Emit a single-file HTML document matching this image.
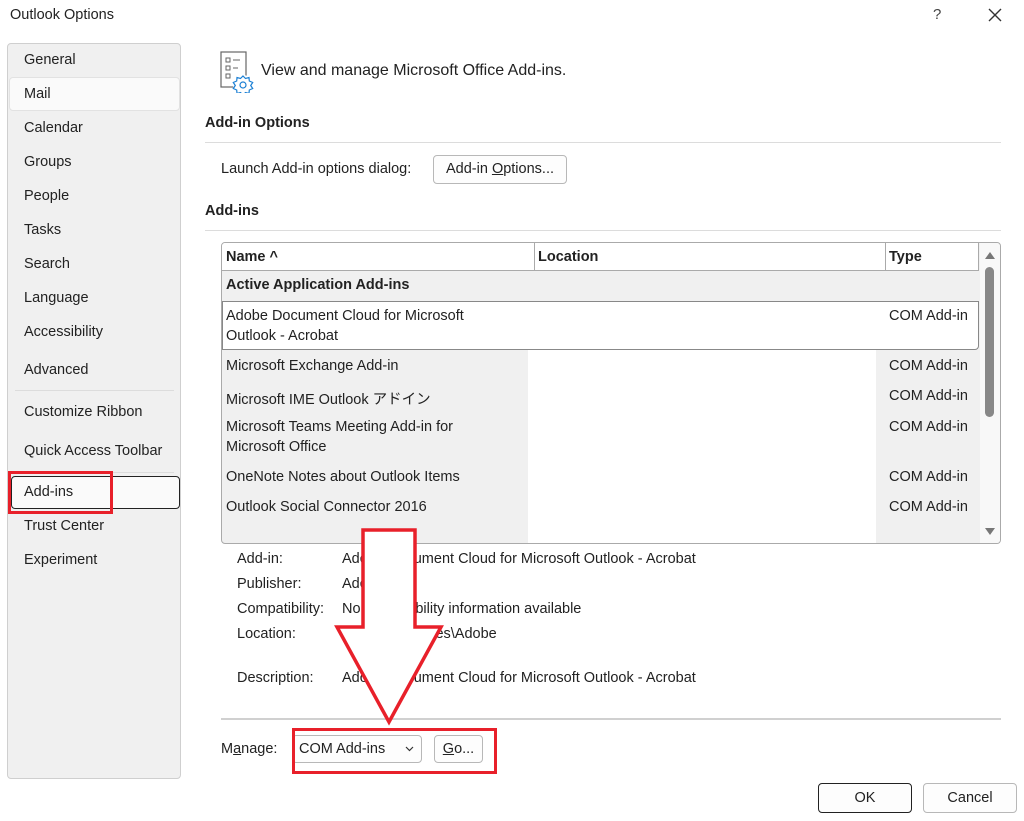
<!DOCTYPE html>
<html><head><meta charset="utf-8"><style>
*{margin:0;padding:0;box-sizing:border-box}
body{width:1024px;height:821px;background:#fff;font-family:"Liberation Sans","Noto Sans CJK JP",sans-serif;font-size:14.5px;color:#222;position:relative;overflow:hidden}
.a{position:absolute;white-space:nowrap}
.nav{position:absolute;left:24px}
.b{font-weight:bold}
.btn{position:absolute;border:1px solid #b8b8b8;border-radius:4px;background:#fdfdfd;text-align:center}
.hl{position:absolute;height:1px;background:#dcdcdc}
</style></head><body>
<div class="a" style="left:10px;top:7px;font-size:14.5px">Outlook Options</div>
<div class="a" style="left:933px;top:6px;font-size:15px;color:#444">?</div>
<svg class="a" style="left:988px;top:8px" width="14" height="14"><path d="M1 1L13 13M13 1L1 13" stroke="#333" stroke-width="1.4"/></svg>

<div class="a" style="left:7px;top:43px;width:174px;height:736px;background:#f0f0f0;border:1px solid #cfcfcf;border-radius:4px"></div>
<div class="a" style="left:9px;top:77px;width:171px;height:34px;background:#fafafa;border:1px solid #e2e2e2;border-radius:4px"></div>
<div class="a" style="left:11px;top:476px;width:169px;height:33px;background:#fafafa;border:1.5px solid #222;border-radius:4px"></div>
<div class="hl" style="left:15px;top:390px;width:159px"></div>
<div class="hl" style="left:15px;top:472px;width:159px"></div>
<div class="nav a" style="top:52px">General</div>
<div class="nav a" style="top:86px">Mail</div>
<div class="nav a" style="top:120px">Calendar</div>
<div class="nav a" style="top:154px">Groups</div>
<div class="nav a" style="top:188px">People</div>
<div class="nav a" style="top:222px">Tasks</div>
<div class="nav a" style="top:256px">Search</div>
<div class="nav a" style="top:290px">Language</div>
<div class="nav a" style="top:324px">Accessibility</div>
<div class="nav a" style="top:362px">Advanced</div>
<div class="nav a" style="top:404px">Customize Ribbon</div>
<div class="nav a" style="top:443px">Quick Access Toolbar</div>
<div class="nav a" style="top:484px">Add-ins</div>
<div class="nav a" style="top:518px">Trust Center</div>
<div class="nav a" style="top:552px">Experiment</div>
<div class="a" style="left:8px;top:471px;width:105px;height:43px;border:3px solid #e8202a"></div>

<svg class="a" style="left:220px;top:51px" width="36" height="42">
<rect x="1" y="1" width="25" height="35" fill="none" stroke="#666" stroke-width="1.2"/>
<rect x="6" y="7" width="4" height="4" fill="none" stroke="#666"/><line x1="13" y1="9" x2="20" y2="9" stroke="#666"/>
<rect x="6" y="15" width="4" height="4" fill="none" stroke="#666"/><line x1="13" y1="17" x2="18" y2="17" stroke="#666"/>
<rect x="6" y="23" width="4" height="4" fill="none" stroke="#666"/>
<circle cx="23" cy="34" r="10" fill="#fff"/>
<path d="M23 25l2.5 2.5 3.5-1 0.3 3.5 3.4 1.5-2 3 2 3-3.4 1.5-0.3 3.5-3.5-1-2.5 2.5-2.5-2.5-3.5 1-0.3-3.5-3.4-1.5 2-3-2-3 3.4-1.5 0.3-3.5 3.5 1z" fill="#fff" stroke="#1a7fd4" stroke-width="1.2"/>
<circle cx="23" cy="34" r="3" fill="none" stroke="#1a7fd4" stroke-width="1.2"/>
</svg>
<div class="a" style="left:261px;top:62px;font-size:16px">View and manage Microsoft Office Add-ins.</div>

<div class="a b" style="left:205px;top:115px">Add-in Options</div>
<div class="hl" style="left:205px;top:142px;width:796px"></div>
<div class="a" style="left:221px;top:161px">Launch Add-in options dialog:</div>
<div class="btn" style="left:433px;top:155px;width:134px;height:29px;line-height:27px">Add-in <u>O</u>ptions...</div>
<div class="a b" style="left:205px;top:203px">Add-ins</div>
<div class="hl" style="left:205px;top:230px;width:796px"></div>

<div class="a" style="left:221px;top:242px;width:780px;height:302px;border:1px solid #aaa;border-radius:4px;background:#f0f0f0;overflow:hidden">
 <div class="a" style="left:0;top:0;width:757px;height:28px;background:#fff;border-bottom:1px solid #aaa"></div>
 <div class="a" style="left:312px;top:0;width:1px;height:28px;background:#aaa"></div>
 <div class="a" style="left:663px;top:0;width:1px;height:28px;background:#aaa"></div>
 <div class="a" style="left:756px;top:0;width:1px;height:28px;background:#aaa"></div>
 <div class="a b" style="left:4px;top:6px">Name ^</div>
 <div class="a b" style="left:316px;top:6px">Location</div>
 <div class="a b" style="left:667px;top:6px">Type</div>
 <div class="a b" style="left:4px;top:34px">Active Application Add-ins</div>
 <div class="a" style="left:306px;top:107px;width:348px;height:200px;background:#fff"></div>
 <div class="a" style="left:0;top:58px;width:757px;height:49px;background:#fff;border:1px solid #888;border-radius:0 0 4px 0"></div>
 <div class="a" style="left:4px;top:65px">Adobe Document Cloud for Microsoft</div>
 <div class="a" style="left:4px;top:85px">Outlook - Acrobat</div>
 <div class="a" style="left:667px;top:65px">COM Add-in</div>
 <div class="a" style="left:4px;top:115px">Microsoft Exchange Add-in</div><div class="a" style="left:667px;top:115px">COM Add-in</div>
 <div class="a" style="left:4px;top:145px">Microsoft IME Outlook アドイン</div><div class="a" style="left:667px;top:145px">COM Add-in</div>
 <div class="a" style="left:4px;top:176px">Microsoft Teams Meeting Add-in for</div><div class="a" style="left:667px;top:176px">COM Add-in</div>
 <div class="a" style="left:4px;top:196px">Microsoft Office</div>
 <div class="a" style="left:4px;top:226px">OneNote Notes about Outlook Items</div><div class="a" style="left:667px;top:226px">COM Add-in</div>
 <div class="a" style="left:4px;top:256px">Outlook Social Connector 2016</div><div class="a" style="left:667px;top:256px">COM Add-in</div>
 <div class="a" style="left:758px;top:0;width:22px;height:302px;background:#f8f8f8"></div>
 <svg class="a" style="left:762px;top:7px" width="12" height="10"><path d="M1 9L6 2L11 9z" fill="#777"/></svg>
 <div class="a" style="left:763px;top:24px;width:9px;height:150px;background:#888;border-radius:5px"></div>
 <svg class="a" style="left:762px;top:284px" width="12" height="10"><path d="M1 1L6 8L11 1z" fill="#777"/></svg>
</div>

<div class="a" style="left:237px;top:551px">Add-in:</div><div class="a" style="left:342px;top:551px">Adobe Document Cloud for Microsoft Outlook - Acrobat</div>
<div class="a" style="left:237px;top:576px">Publisher:</div><div class="a" style="left:342px;top:576px">Adobe</div>
<div class="a" style="left:237px;top:601px">Compatibility:</div><div class="a" style="left:342px;top:601px">No compatibility information available</div>
<div class="a" style="left:237px;top:626px">Location:</div><div class="a" style="left:342px;top:626px">C:\Program Files\Adobe</div>
<div class="a" style="left:237px;top:670px">Description:</div><div class="a" style="left:342px;top:670px">Adobe Document Cloud for Microsoft Outlook - Acrobat</div>

<div class="a" style="left:221px;top:718px;width:780px;height:2px;background:#d0d0d0"></div>
<div class="a" style="left:221px;top:741px"><span>M<u>a</u>nage:</span></div>
<div class="btn" style="left:292px;top:735px;width:130px;height:28px;text-align:left;padding-left:6px;line-height:26px">COM Add-ins
<svg style="position:absolute;right:7px;top:10px" width="9" height="6"><path d="M1 1L4.5 4.5L8 1" fill="none" stroke="#333" stroke-width="1.2"/></svg></div>
<div class="btn" style="left:434px;top:735px;width:49px;height:28px;line-height:26px"><u>G</u>o...</div>
<div class="a" style="left:292px;top:728px;width:205px;height:46px;border:3px solid #e8202a"></div>

<svg class="a" style="left:330px;top:526px" width="120" height="205">
<path d="M33 4H85V101H111L59 196L7 101H33Z" fill="#fff" stroke="#e8202a" stroke-width="3.5" stroke-linejoin="miter"/>
</svg>

<div class="btn" style="left:818px;top:783px;width:94px;height:30px;line-height:28px;border:1.5px solid #222">OK</div>
<div class="btn" style="left:923px;top:783px;width:94px;height:30px;line-height:28px">Cancel</div>
</body></html>
